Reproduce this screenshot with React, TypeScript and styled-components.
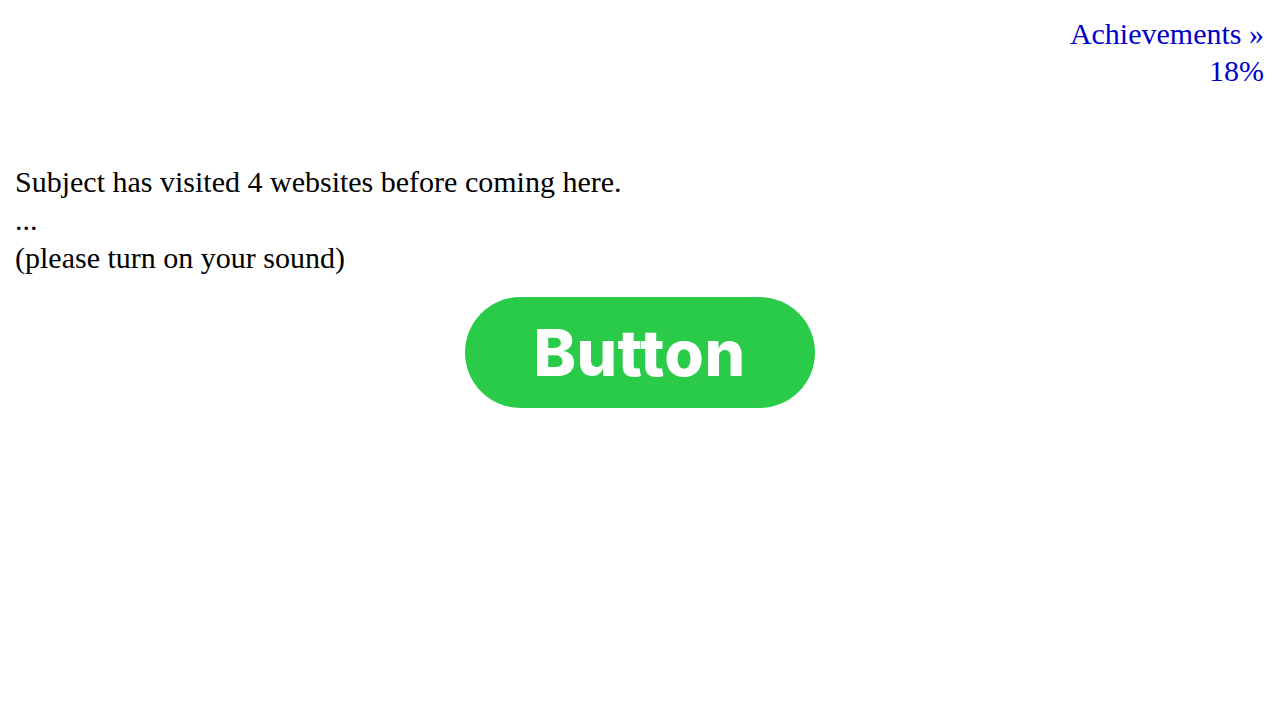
import React from 'react';
import styled, { createGlobalStyle } from 'styled-components';

const GlobalStyle = createGlobalStyle`
    html, body {
        margin: 0;
        padding: 0;
        background: #ffffff;
    }

    body {
        font-family: "Liberation Serif", "Times New Roman", serif;
        color: #000000;
    }
`

const Page = styled.div`
    display: flex;
    flex-direction: column;
    padding: 15px 16px 0 15px;
`

const Header = styled.div`
    display: flex;
    justify-content: flex-end;
`

const AchievementsLink = styled.a`
    display: block;
    text-align: right;
    color: #0000cc;
    text-decoration: none;
    font-size: 30px;
    line-height: 37px;
    cursor: pointer;
`

const Story = styled.div`
    margin-top: 74px;
    font-size: 30px;
    line-height: 38px;
`

const Line = styled.div`
    white-space: nowrap;
`

const ButtonRow = styled.div`
    display: flex;
    justify-content: center;
    margin-top: 20px;
`

const BigButton = styled.button`
    width: 350px;
    height: 111px;
    border: none;
    border-radius: 56px;
    background: #2acb48;
    color: #ffffff;
    font-family: Inter, "Open Sans", sans-serif;
    font-weight: 800;
    font-size: 64px;
    letter-spacing: 0.5px;
    padding: 0;
    cursor: pointer;
`

function App() {
    return (
        <>
            <GlobalStyle />
            <Page>
                <Header>
                    <AchievementsLink>
                        Achievements »<br />
                        18%
                    </AchievementsLink>
                </Header>
                <Story>
                    <Line>Subject has visited 4 websites before coming here.</Line>
                    <Line>...</Line>
                    <Line>(please turn on your sound)</Line>
                </Story>
                <ButtonRow>
                    <BigButton>Button</BigButton>
                </ButtonRow>
            </Page>
        </>
    );
}

export default App;
